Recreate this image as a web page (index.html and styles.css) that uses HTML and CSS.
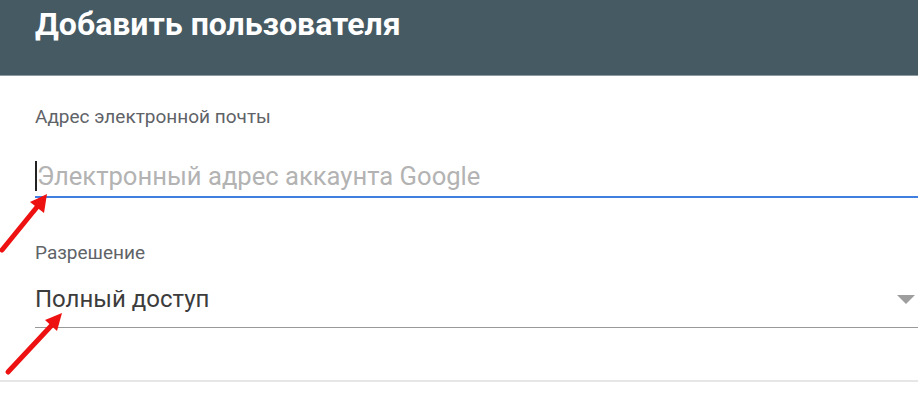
FILE: index.html
```html
<html><head>
    <title>Добавить пользователя</title>
    <link rel="stylesheet" href="styles.css">
</head>
<body>
    <div class="dialog">
        <div class="dialog-head">
            <h1>Добавить пользователя</h1>
        </div>
        <div class="dialog-body">
            <div class="field">
                <label for="email">Адрес электронной почты</label>
                <div class="input-line focused">
                    <span class="caret"></span>
                    <input type="text" id="email" placeholder="Электронный адрес аккаунта Google">
                </div>
            </div>
            <div class="field field-select">
                <label>Разрешение</label>
                <div class="input-line">
                    <span class="value">Полный доступ</span>
                    <span class="arrow-down"></span>
                </div>
            </div>
        </div>
    </div>

    <svg class="marks" width="918" height="411" viewBox="0 0 918 411">
        <line x1="2" y1="250" x2="37" y2="207" stroke="#ee1111" stroke-width="5" stroke-linecap="round"/>
        <polygon points="47,194 44,213 30,202" fill="#ee1111"/>
        <line x1="8" y1="372" x2="51" y2="326" stroke="#ee1111" stroke-width="5" stroke-linecap="round"/>
        <polygon points="62,313 57,331 45,320" fill="#ee1111"/>
    </svg>
</body></html>
```

FILE: styles.css
```css
body {
    font-family: Roboto, "Noto Sans", Arial, sans-serif;
    background-color: #fff;
    margin: 0;
    padding: 0;
    color: #333;
}

.dialog {
    width: 918px;
}

.dialog-head {
    height: 76px;
    background-color: #465a63;
    border-bottom: 1px solid #8d9aa1;
    box-sizing: border-box;
}

h1 {
    margin: 0;
    padding: 5px 0 0 35px;
    font-size: 32px;
    font-weight: bold;
    color: #fff;
}

.dialog-body {
    padding: 30px 0 52px 35px;
    border-bottom: 2px solid #e6e6e6;
}

.field label {
    display: block;
    font-size: 19px;
    line-height: 22px;
    color: #5f6368;
}

.input-line {
    display: flex;
    align-items: center;
    margin-top: 32px;
    padding-bottom: 4px;
    border-bottom: 1px solid #999;
}

.input-line.focused {
    border-bottom: 2px solid #3f7fe0;
}

.caret {
    width: 2px;
    height: 30px;
    background: #222;
}

.input-line input {
    flex: 1;
    border: none;
    outline: none;
    padding: 0;
    margin: 0;
    font-family: inherit;
    font-size: 25.6px;
    line-height: 32px;
    height: 32px;
    color: #333;
    background: transparent;
}

.input-line input::placeholder {
    color: #b3b3b3;
}

.field-select {
    margin-top: 44px;
}

.field-select .input-line {
    margin-top: 21px;
    padding-bottom: 14px;
}

.value {
    flex: 1;
    font-size: 24px;
    line-height: 28px;
    color: #3c3c3c;
}

.arrow-down {
    width: 0;
    height: 0;
    margin-right: 3px;
    border-left: 9px solid transparent;
    border-right: 9px solid transparent;
    border-top: 9px solid #9e9e9e;
}

.marks {
    position: absolute;
    left: 0;
    top: 0;
    pointer-events: none;
}
```
